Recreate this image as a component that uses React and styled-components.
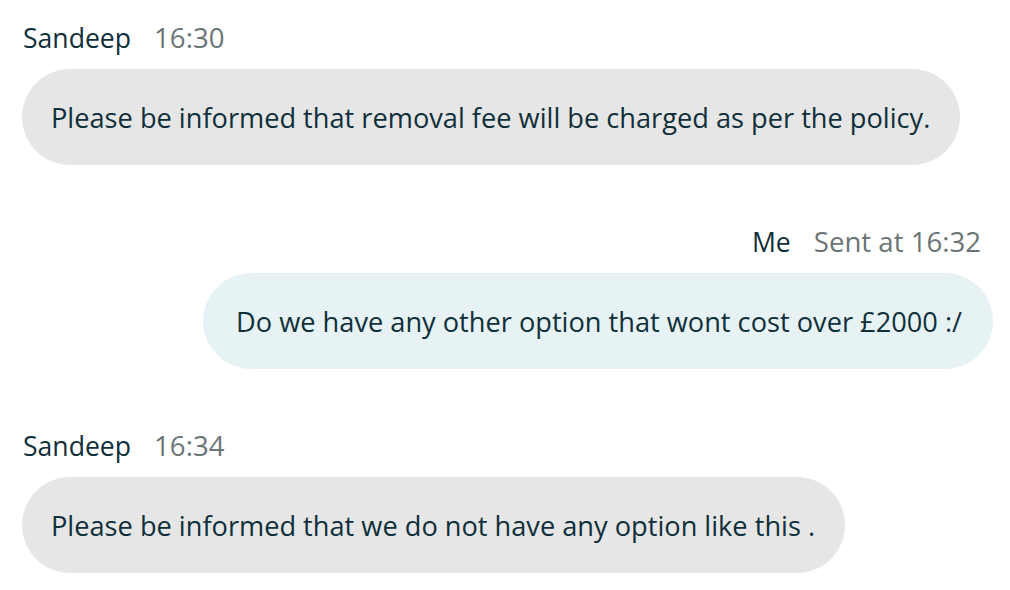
import React from "react";
import styled, { createGlobalStyle } from "styled-components";

const Global = createGlobalStyle`
  html, body { margin: 0; padding: 0; background: #ffffff; }
  body { font-family: "Open Sans", "Noto Sans", sans-serif; }
`;

const Thread = styled.div`
  display: flex;
  flex-direction: column;
  gap: 60px;
  padding: 21px 17px 0 22px;
  width: 1010px;
  box-sizing: border-box;
`;

const Group = styled.div`
  display: flex;
  flex-direction: column;
  align-items: ${(p) => (p.$mine ? "flex-end" : "flex-start")};
  gap: 16px;
`;

const Header = styled.div`
  display: flex;
  align-items: baseline;
  gap: 23px;
  height: 32px;
  line-height: 32px;
  font-size: 26.6px;
  padding: ${(p) => (p.$mine ? "0 12px 0 0" : "0 0 0 1px")};
`;

const Name = styled.span`
  color: #0f2f3a;
`;

const Time = styled.span`
  color: #6b7575;
  font-size: 27.6px;
`;

const Bubble = styled.div`
  display: flex;
  align-items: center;
  height: 96px;
  box-sizing: border-box;
  padding: 0 ${(p) => (p.$mine ? "31px" : "30px")} 0 ${(p) => (p.$mine ? "33px" : "29px")};
  border-radius: 48px;
  font-size: 27.2px;
  color: #0f2f3a;
  background: ${(p) => (p.$mine ? "#e6f2f3" : "#e6e6e6")};
  white-space: nowrap;
`;

const messages = [
  { name: "Sandeep", time: "16:30", text: "Please be informed that removal fee will be charged as per the policy." },
  { name: "Me", time: "Sent at 16:32", text: "Do we have any other option that wont cost over £2000 :/", mine: true },
  { name: "Sandeep", time: "16:34", text: "Please be informed that we do not have any option like this ." },
];

export default function App() {
  return (
    <>
      <Global />
      <Thread>
        {messages.map((m, i) => (
          <Group key={i} $mine={m.mine}>
            <Header $mine={m.mine}>
              <Name>{m.name}</Name>
              <Time>{m.time}</Time>
            </Header>
            <Bubble $mine={m.mine}>{m.text}</Bubble>
          </Group>
        ))}
      </Thread>
    </>
  );
}
